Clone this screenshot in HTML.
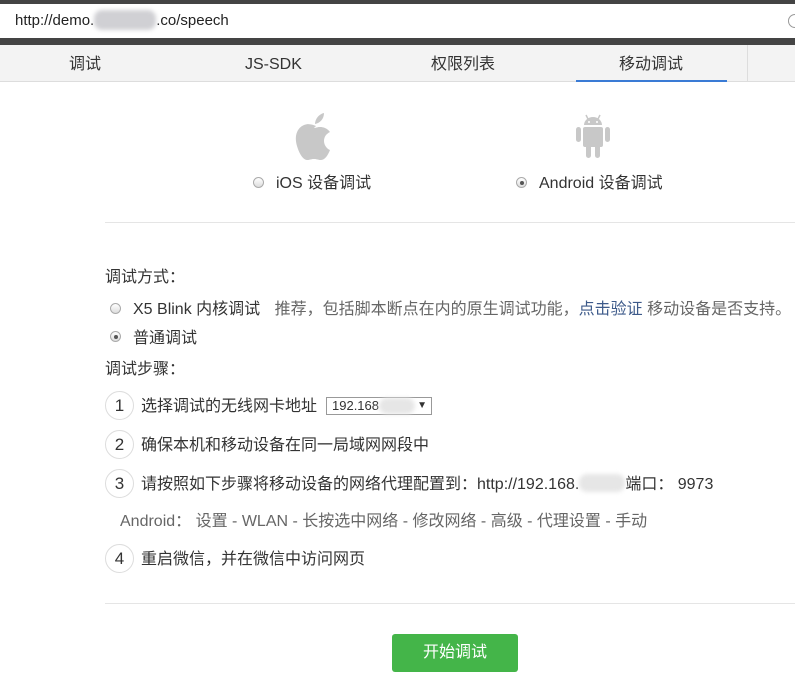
<!DOCTYPE html>
<html><head><meta charset="utf-8"><style>
*{margin:0;padding:0;box-sizing:border-box}
body{width:795px;height:682px;overflow:hidden;background:#fff;font-family:"Liberation Sans","Noto Sans CJK SC",sans-serif;font-size:16px;line-height:20px;color:#333;position:relative}
.a{position:absolute;white-space:nowrap}
.radio{position:absolute;width:11px;height:11px;border-radius:50%;border:1px solid #aaa;background:linear-gradient(#fff,#ddd)}
.radio.on::after{content:"";position:absolute;left:2.5px;top:2.5px;width:4px;height:4px;border-radius:50%;background:#555}
.num{position:absolute;width:29px;height:29px;border-radius:50%;border:1px solid #ddd;display:flex;align-items:center;justify-content:center;font-size:17px;color:#333}
.bl{display:inline-block;background:#e6e6e6;border-radius:8px;filter:blur(2px);vertical-align:middle}
</style></head><body>
<div class="a" style="left:0;top:0;width:795px;height:4px;background:#444"></div>
<div class="a" style="left:0;top:38px;width:795px;height:7px;background:#444"></div>
<div class="a" style="left:15px;top:11px;font-size:15px;color:#222">http://demo.<span class="bl" style="width:62px;height:20px;background:#d0d0d4;margin-top:-3px"></span>.co/speech</div>
<div class="a" style="left:788px;top:14px;width:14px;height:14px;border:1px solid #999;border-radius:50%"></div>
<div class="a" style="left:0;top:45px;width:795px;height:37px;background:#f3f3f3;border-bottom:1px solid #ddd"></div>
<div class="a" style="left:69px;top:55px">调试</div>
<div class="a" style="left:245px;top:55px">JS-SDK</div>
<div class="a" style="left:431px;top:55px">权限列表</div>
<div class="a" style="left:619px;top:55px">移动调试</div>
<div class="a" style="left:576px;top:80px;width:151px;height:2px;background:#3a7bd5"></div>
<div class="a" style="left:747px;top:45px;width:1px;height:36px;background:#ddd"></div>
<svg class="a" style="left:293px;top:110px" width="46" height="52" viewBox="0 0 46 52"><path d="M23 16c-3-1-7-3-12-1C4 18 1 26 4 36c2 7 6 14 10 14 3 0 4-1 7-1s4 1 7 1c4 0 7-5 9-10-3-1-6-5-6-9 0-4 2-7 6-9-3-4-7-5-10-5-3 0-4 1-6 1z" fill="#c8c8c8"/><path d="M22 14c0-5 4-10 9-11 0 6-4 10-9 11z" fill="#c8c8c8"/></svg>
<svg class="a" style="left:572px;top:112px" width="42" height="50" viewBox="0 0 42 50"><path d="M12 13a9 8 0 0 1 18 0z" fill="#c8c8c8"/><line x1="14" y1="3" x2="16" y2="7" stroke="#c8c8c8" stroke-width="1.5"/><line x1="28" y1="3" x2="26" y2="7" stroke="#c8c8c8" stroke-width="1.5"/><circle cx="17" cy="10" r="1" fill="#fff"/><circle cx="25" cy="10" r="1" fill="#fff"/><rect x="11" y="15" width="20" height="20" rx="2" fill="#c8c8c8"/><rect x="4" y="15" width="5" height="15" rx="2.5" fill="#c8c8c8"/><rect x="33" y="15" width="5" height="15" rx="2.5" fill="#c8c8c8"/><rect x="14" y="32" width="5" height="14" rx="2.5" fill="#c8c8c8"/><rect x="23" y="32" width="5" height="14" rx="2.5" fill="#c8c8c8"/></svg>
<div class="radio" style="left:253px;top:177px"></div>
<div class="a" style="left:276px;top:174px">iOS 设备调试</div>
<div class="radio on" style="left:516px;top:177px"></div>
<div class="a" style="left:539px;top:174px">Android 设备调试</div>
<div class="a" style="left:105px;top:222px;width:690px;height:1px;background:#e5e5e5"></div>
<div class="a" style="left:105px;top:268px">调试方式：</div>
<div class="radio" style="left:110px;top:303px"></div>
<div class="a" style="left:133px;top:300px">X5 Blink 内核调试 <span style="color:#666;margin-left:10px">推荐，包括脚本断点在内的原生调试功能，<span style="color:#3d5a8a">点击验证</span> 移动设备是否支持。</span></div>
<div class="radio on" style="left:110px;top:331px"></div>
<div class="a" style="left:133px;top:329px">普通调试</div>
<div class="a" style="left:105px;top:360px">调试步骤：</div>
<div class="num" style="left:105px;top:391px">1</div>
<div class="a" style="left:141px;top:397px">选择调试的无线网卡地址</div>
<div class="a" style="left:326px;top:397px;width:106px;height:18px;border:1px solid #999;font-size:13px;line-height:16px;padding-left:5px">192.168<span class="bl" style="width:36px;height:16px;margin-top:-2px"></span><span style="position:absolute;right:4px;font-size:10px">▼</span></div>
<div class="num" style="left:105px;top:430px">2</div>
<div class="a" style="left:141px;top:436px">确保本机和移动设备在同一局域网网段中</div>
<div class="num" style="left:105px;top:469px">3</div>
<div class="a" style="left:141px;top:475px">请按照如下步骤将移动设备的网络代理配置到：http://192.168.<span class="bl" style="width:46px;height:18px;margin-top:-3px"></span>端口： 9973</div>
<div class="a" style="left:120px;top:512px;color:#666">Android： 设置 - WLAN - 长按选中网络 - 修改网络 - 高级 - 代理设置 - 手动</div>
<div class="num" style="left:105px;top:544px">4</div>
<div class="a" style="left:141px;top:550px">重启微信，并在微信中访问网页</div>
<div class="a" style="left:105px;top:603px;width:690px;height:1px;background:#e5e5e5"></div>
<div class="a" style="left:392px;top:634px;width:126px;height:38px;background:#44b549;border-radius:3px;color:#fff;text-align:center;line-height:38px;font-size:16px">开始调试</div>
</body></html>
